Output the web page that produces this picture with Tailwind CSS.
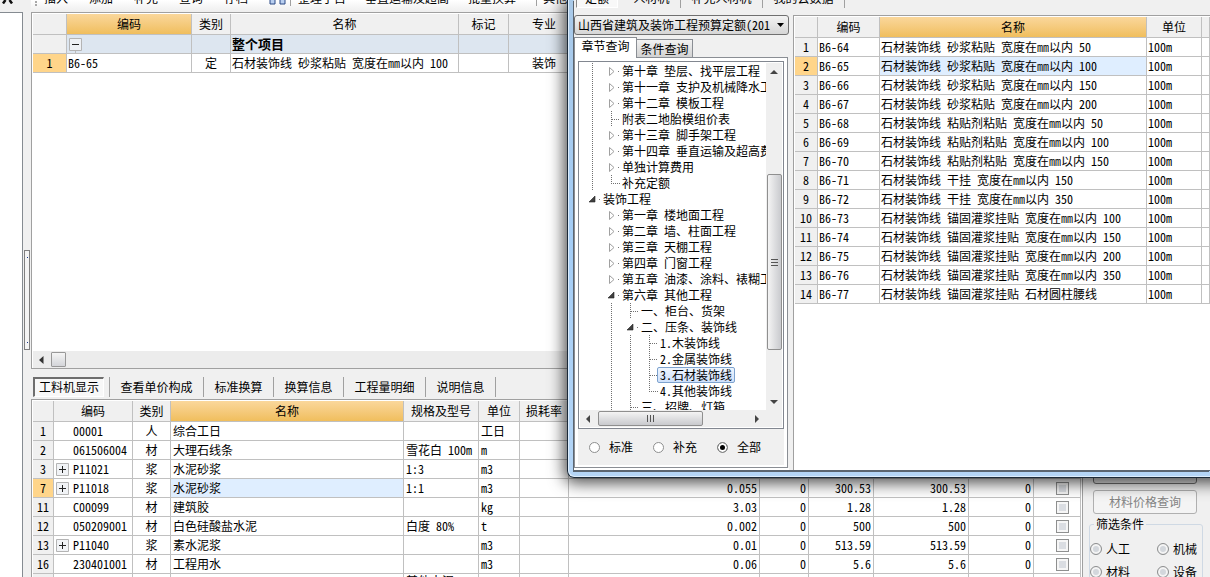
<!DOCTYPE html>
<html lang="zh-CN">
<head>
<meta charset="utf-8">
<title>工程预算定额查询</title>
<script src="https://cdn.jsdelivr.net/npm/@tailwindcss/browser@4"></script>
</head>
<body class="relative flex h-screen overflow-hidden bg-[#f0f0f0] font-['Noto_Sans_Mono_CJK_SC','Liberation_Mono','Noto_Sans_CJK_SC',monospace] text-[12px] leading-4 text-black">

<!-- left dock -->
<aside class="flex w-[23px] shrink-0 flex-col">
  <div class="h-3 shrink-0 overflow-hidden">
    <svg class="ml-[2px]" width="12" height="4" viewBox="0 0 12 4"><path d="M3.500 0 1 3.500M7.500 0 10 3.500" stroke="#111" stroke-width="2.500" fill="none"/></svg>
  </div>
  <div class="flex-1 border-t border-r border-[#858b91] bg-white"></div>
</aside>
<div class="flex w-2 shrink-0 flex-col px-px pt-[250px]">
  <div class="flex h-[100px] flex-col justify-between border border-[#808080] bg-[#f4f4f4] py-1.5">
    <i class="mx-auto size-px bg-blue-900"></i><i class="mx-auto size-px bg-blue-900"></i>
  </div>
</div>

<main class="flex min-w-0 flex-1 flex-col">
  <!-- toolbar -->
  <div class="h-3 shrink-0 overflow-hidden bg-linear-to-b from-white to-[#eeeeee]">
    <div class="-mt-[10px] flex h-4 items-center whitespace-nowrap">
      <span class="ml-1 mr-[7px] h-4 border-l-2 border-dotted border-[#a8a8a8]"></span>
      <div class="flex gap-[21px]">
        <button>插入</button><button>添加</button><button>补充</button><button>查询</button><button>存档</button>
        <button aria-label="查找"><svg width="17" height="16" viewBox="0 0 17 16"><path d="M1 2h5v12H1zM11 2h5v12h-5z" fill="#b9cff0" stroke="#2c4a86"/><path d="M6 8h5" stroke="#2c4a86" stroke-width="2"/></svg></button>
      </div>
      <span class="ml-[4px] mr-[7px] h-4 border-l border-[#a0a0a0]"></span>
      <div class="flex gap-[19px]"><button>整理子目</button><button>垂直运输及超高</button><button>批量换算</button></div>
      <span class="ml-5 mr-[6px] h-4 border-l border-[#a0a0a0]"></span>
      <button>其他</button>
    </div>
  </div>

  <!-- estimate items -->
  <section class="flex h-[357px] shrink-0 flex-col border border-[#a0a0a0] bg-white pt-px pl-px">
    <table class="w-full table-fixed border-separate border-spacing-0">
      <colgroup><col class="w-[34px]"><col class="w-[125px]"><col class="w-[39px]"><col class="w-[228px]"><col class="w-[50px]"><col class="w-[71px]"><col></colgroup>
      <thead><tr class="[&>th]:h-[21px] [&>th]:border-r [&>th]:border-b [&>th]:border-[#c0c0c0] [&>th]:bg-[#f0f0f0] [&>th]:p-0 [&>th]:font-normal">
        <th></th><th class="bg-linear-to-b from-[#fad79b] to-[#f0be5c]">编码</th><th>类别</th><th>名称</th><th>标记</th><th>专业</th><th></th></tr></thead>
      <tbody class="[&_td]:h-[19px] [&_td]:border-r [&_td]:border-b [&_td]:border-[#c0c0c0] [&_td]:px-px [&_td]:py-0 [&_td]:whitespace-nowrap">
        <tr class="bg-[#dde6f0]"><td class="bg-[#f0f0f0]"></td>
          <td><svg class="ml-px block" width="13" height="18" viewBox="0 0 13 18"><path d="M.5 3.500h12v12H.5z" fill="#eef1f5" stroke="#b4b4b4"/><path d="M3 9.500h7" stroke="#222"/><path d="M6.500 16v2" stroke="#bbb"/></svg></td>
          <td></td><td class="text-[13px] font-bold">整个项目</td><td></td><td></td><td></td></tr>
        <tr><td class="bg-[#ffd58a] text-center">1</td><td>B6-65</td><td class="text-center">定</td><td>石材装饰线 砂浆粘贴 宽度在㎜以内 100</td><td></td><td class="text-center">装饰</td><td></td></tr>
      </tbody>
    </table>
    <div class="flex-1"></div>
    <div class="flex h-[17px] items-center bg-[#ececec] pl-1.5">
      <svg width="5" height="8" viewBox="0 0 5 8"><path d="M4.500 0v8L0 4z" fill="#333"/></svg>
      <div class="ml-[7px] h-[15px] w-[15px] rounded-[1px] border border-[#989898] bg-linear-to-b from-[#f5f5f5] to-[#d4d5d9]"></div>
    </div>
  </section>

  <!-- detail tabs -->
  <nav class="flex h-[30px] shrink-0 items-center pl-0.5 pt-[5px] [&>button]:h-5 [&>button]:whitespace-nowrap">
    <button class="w-[71px] border border-t-2 border-l-2 border-t-[#6e6e6e] border-l-[#6e6e6e] border-r-white border-b-white bg-[#f8f8f8] leading-4">工料机显示</button>
    <button class="ml-[5px] w-[94px] border-l border-[#a0a0a0]">查看单价构成</button>
    <button class="w-[70px] border-l border-[#a0a0a0]">标准换算</button>
    <button class="w-[70px] border-l border-[#a0a0a0]">换算信息</button>
    <button class="w-[82px] border-l border-[#a0a0a0]">工程量明细</button>
    <button class="w-[71px] border-x border-[#a0a0a0]">说明信息</button>
  </nav>

  <div class="flex min-h-0 flex-1">
    <!-- labour, material and machine rows -->
    <section class="min-w-0 flex-1 overflow-hidden border-t border-l border-[#a0a0a0] bg-white pt-px pr-px pl-px">
      <table class="w-full table-fixed border-separate border-spacing-0">
        <colgroup><col class="w-[21px]"><col class="w-[79px]"><col class="w-[38px]"><col class="w-[233px]"><col class="w-[75px]"><col class="w-[41px]"><col class="w-[49px]"><col><col class="w-[49px]"><col class="w-[65px]"><col class="w-[95px]"><col class="w-[65px]"><col class="w-[47px]"></colgroup>
        <thead><tr class="[&>th]:h-[21px] [&>th]:border-r [&>th]:border-b [&>th]:border-[#c0c0c0] [&>th]:bg-[#f0f0f0] [&>th]:p-0 [&>th]:font-normal [&>th]:whitespace-nowrap">
          <th></th><th>编码</th><th>类别</th><th class="bg-linear-to-b from-[#fad79b] to-[#f0be5c]">名称</th><th>规格及型号</th><th>单位</th><th>损耗率</th><th></th><th></th><th></th><th></th><th></th><th></th></tr></thead>
        <tbody id="materials" class="[&_td]:h-[19px] [&_td]:border-r [&_td]:border-b [&_td]:border-[#c0c0c0] [&_td]:px-0.5 [&_td]:py-0 [&_td]:whitespace-nowrap"></tbody>
      </table>
    </section>

    <!-- filter panel -->
    <aside class="w-[128px] shrink-0 overflow-hidden border-l border-[#a0a0a0] pt-[61px] pr-[7px] pl-[6px]">
      <div class="mr-[6px] ml-1 flex flex-col gap-[6px]">
        <button class="h-6 rounded-[3px] border border-[#707070] bg-[#e6e6e6]" aria-label="信息价"></button>
        <button class="h-6 rounded-[3px] border border-[#b0b0b0] bg-[#f4f4f4] text-[#838383]" disabled>材料价格查询</button>
      </div>
      <fieldset class="mt-[2px] h-20 rounded-[3px] border border-[#cfd9e4]">
        <legend class="ml-1 px-0.5">筛选条件</legend>
        <div class="grid grid-cols-[67px_1fr] gap-y-[7px] pt-[9px] [&>label]:flex [&>label]:items-center [&>label]:gap-1 [&>label]:whitespace-nowrap [&_input]:size-3 [&_input]:shrink-0 [&_input]:appearance-none [&_input]:rounded-full [&_input]:border [&_input]:border-[#8e8f8f] [&_input]:bg-[#d3d7dc] [&_input]:shadow-[inset_0_0_0_2px_#f4f4f4]">
          <label><input type="radio" name="filter">人工</label><label><input type="radio" name="filter">机械</label>
          <label><input type="radio" name="filter">材料</label><label><input type="radio" name="filter">设备</label>
        </div>
      </fieldset>
    </aside>
  </div>
</main>

<!-- quota lookup window -->
<div class="absolute top-0 -right-4 left-[567px] z-20 flex h-[478px] rounded-bl-[7px] border-b border-l border-[#1c2a38] bg-linear-to-b from-[#a9c9e8] via-[#a4cdf6] to-[#b4d5f6] pr-4 pb-[6px] pl-[6px] shadow-[0_2px_16px_3px_#000000b3,inset_1px_-1px_0_#dcecfb]">
  <div class="flex min-w-0 flex-1 flex-col border-b border-[#5b6570] bg-[#f0f0f0] shadow-[-1px_1px_0_#5b6570]">
    <nav class="flex h-[15px] shrink-0 items-start overflow-hidden [&>button]:-mt-3 [&>button]:h-5 [&>button]:whitespace-nowrap">
      <button class="ml-[2px] w-[42px] border border-[#8a8a8a] border-r-white border-b-white bg-[#f8f8f8]">定额</button>
      <button class="ml-[5px] w-[58px] border-r border-[#a0a0a0]">人材机</button>
      <button class="w-[82px] border-r border-[#a0a0a0]">补充人材机</button>
      <button class="w-[82px] border-r border-[#a0a0a0]">我的云数据</button>
    </nav>
    <div class="flex min-h-0 flex-1">
      <div class="flex w-[215px] shrink-0 flex-col">
        <div class="relative h-5 shrink-0">
          <select aria-label="定额库" class="h-5 w-full appearance-none rounded-[3px] border border-[#707070] bg-linear-to-b from-[#f3f3f3] to-[#d6d6d6] pl-[3px] text-[12px] leading-4"><option>山西省建筑及装饰工程预算定额(201</option></select>
          <svg class="pointer-events-none absolute top-[8px] right-[5px]" width="7" height="4" viewBox="0 0 7 4"><path d="M0 0h7L3.500 4z" fill="#000"/></svg>
        </div>
        <div class="z-10 -mb-px flex h-[23px] shrink-0 items-end pt-[2px]">
          <button class="h-[21px] w-[63px] border border-b-0 border-[#8a8e94] bg-white pb-1">章节查询</button>
          <button class="h-[19px] w-[56px] border border-l-0 border-[#8a8e94] bg-linear-to-b from-[#f2f2f2] to-[#d2d2d2]">条件查询</button>
        </div>
        <div class="mr-px flex min-h-0 flex-1 flex-col border border-[#8a8e94] bg-white p-[3px] pb-[2px]">
          <div class="flex h-[368px] shrink-0 flex-col border border-[#828790] bg-white p-px">
            <div class="flex min-h-0 flex-1">
              <ul id="tree" class="min-w-0 flex-1 overflow-hidden pl-[3px]"></ul>
              <div class="flex w-[16px] shrink-0 flex-col items-center bg-[#efefef]">
                <svg class="mt-[7px]" width="8" height="4" viewBox="0 0 8 4"><path d="M0 4h8L4 0z" fill="#444"/></svg>
                <div class="mt-[100px] flex h-[176px] w-[15px] flex-col items-center justify-center gap-[2px] rounded-[2px] border border-[#8f8f8f] bg-linear-to-r from-[#f4f4f4] to-[#c9cace]">
                  <i class="h-px w-[7px] bg-[#555]"></i><i class="h-px w-[7px] bg-[#555]"></i><i class="h-px w-[7px] bg-[#555]"></i>
                </div>
                <svg class="mt-auto mb-[6px]" width="8" height="4" viewBox="0 0 8 4"><path d="M0 0h8L4 4z" fill="#444"/></svg>
              </div>
            </div>
            <div class="flex h-[17px] shrink-0 items-center bg-[#efefef] pr-[23px] pl-[6px]">
              <svg width="4" height="8" viewBox="0 0 4 8"><path d="M4 0v8L0 4z" fill="#444"/></svg>
              <div class="ml-[8px] flex h-[15px] w-[105px] items-center justify-center gap-[2px] rounded-[2px] border border-[#8f8f8f] bg-linear-to-b from-[#f4f4f4] to-[#c9cace]">
                <i class="h-[7px] w-px bg-[#555]"></i><i class="h-[7px] w-px bg-[#555]"></i><i class="h-[7px] w-px bg-[#555]"></i>
              </div>
              <svg class="ml-auto" width="4" height="8" viewBox="0 0 4 8"><path d="M0 0v8L4 4z" fill="#444"/></svg>
            </div>
          </div>
          <div class="flex flex-1 items-center gap-5 bg-[#f0f0f0] pl-[11px] [&>label]:flex [&>label]:items-center [&>label]:gap-[9px] [&_input]:size-[11px] [&_input]:appearance-none [&_input]:rounded-full [&_input]:border [&_input]:border-[#8e8f8f] [&_input]:bg-white [&_input]:checked:bg-black [&_input]:checked:shadow-[inset_0_0_0_2px_#fff]">
            <label><input type="radio" name="scope">标准</label>
            <label><input type="radio" name="scope">补充</label>
            <label><input type="radio" name="scope" checked>全部</label>
          </div>
        </div>
        <div class="h-[2px] shrink-0 bg-white"></div>
      </div>
      <section class="ml-1 min-w-0 flex-1 overflow-hidden border-t border-l border-[#a0a0a0] bg-white pt-px pl-px">
        <table class="w-full table-fixed border-separate border-spacing-0">
          <colgroup><col class="w-[23px]"><col class="w-[62px]"><col><col class="w-[55px]"><col class="w-[8px]"></colgroup>
          <thead><tr class="[&>th]:h-[21px] [&>th]:border-r [&>th]:border-b [&>th]:border-[#c0c0c0] [&>th]:bg-[#f0f0f0] [&>th]:p-0 [&>th]:font-normal">
            <th></th><th>编码</th><th class="bg-linear-to-b from-[#fad79b] to-[#f0be5c]">名称</th><th>单位</th><th></th></tr></thead>
          <tbody id="quotas" class="[&_td]:h-[19px] [&_td]:border-r [&_td]:border-b [&_td]:border-[#c0c0c0] [&_td]:px-px [&_td]:py-0 [&_td]:whitespace-nowrap"></tbody>
        </table>
      </section>
    </div>
  </div>
</div>

<script>
// detail rows: no, expandable, code, kind, name, spec, unit, five figures
const materials = [
  ['1', 0, '00001', '人', '综合工日', '', '工日'],
  ['2', 0, '061506004', '材', '大理石线条', '雪花白 100m', 'm'],
  ['3', 1, 'P11021', '浆', '水泥砂浆', '1:3', 'm3'],
  ['7', 1, 'P11018', '浆', '水泥砂浆', '1:1', 'm3', '0.055', '0', '300.53', '300.53', '0'],
  ['11', 0, 'C00099', '材', '建筑胶', '', 'kg', '3.03', '0', '1.28', '1.28', '0'],
  ['12', 0, '050209001', '材', '白色硅酸盐水泥', '白度 80%', 't', '0.002', '0', '500', '500', '0'],
  ['13', 1, 'P11040', '浆', '素水泥浆', '', 'm3', '0.01', '0', '513.59', '513.59', '0'],
  ['16', 0, '230401001', '材', '工程用水', '', 'm3', '0.06', '0', '5.6', '5.6', '0'],
  ['', 0, '', '', '', '<div class="leading-[13px]">其他水泥<br>32.5</div>', '', '', '', '', '', ''],
];
const plus = '<svg class="shrink-0" width="13" height="13" viewBox="0 0 13 13"><path d="M.5.5h12v12H.5z" fill="#f1f3f6" stroke="#b4b4b4"/><path d="M3 6.500h7M6.500 3v7" stroke="#222"/></svg>';
document.getElementById('materials').innerHTML = materials.map(r => {
  const on = r[0] === '7';
  const nums = [7, 8, 9, 10, 11].map(i => `<td class="text-right">${r[i] || ''}</td>`).join('');
  return `<tr><td class="text-center ${on ? 'bg-[#ffd58a]' : 'bg-[#f0f0f0]'}">${r[0]}</td>
    <td><div class="flex items-center"><span class="flex w-[17px]">${r[1] ? plus : ''}</span>${r[2]}</div></td>
    <td class="text-center">${r[3]}</td><td class="${on ? 'bg-[#dfeeff]' : ''}">${r[4]}</td><td>${r[5]}</td><td>${r[6]}</td><td></td>${nums}
    <td class="border-r-0"><input type="checkbox" aria-label="选择 ${r[2]}" class="ml-5 block size-[13px] appearance-none border border-[#8e8f8f] bg-[#dadde2] shadow-[inset_0_0_0_2px_#f6f6f6]"></td></tr>`;
}).join('');

const names = ['砂浆粘贴 宽度在㎜以内 50', '砂浆粘贴 宽度在㎜以内 100', '砂浆粘贴 宽度在㎜以内 150', '砂浆粘贴 宽度在㎜以内 200',
  '粘贴剂粘贴 宽度在㎜以内 50', '粘贴剂粘贴 宽度在㎜以内 100', '粘贴剂粘贴 宽度在㎜以内 150', '干挂 宽度在㎜以内 150', '干挂 宽度在㎜以内 350',
  '锚固灌浆挂贴 宽度在㎜以内 100', '锚固灌浆挂贴 宽度在㎜以内 150', '锚固灌浆挂贴 宽度在㎜以内 200', '锚固灌浆挂贴 宽度在㎜以内 350', '锚固灌浆挂贴 石材圆柱腰线'];
document.getElementById('quotas').innerHTML = names.map((n, i) => {
  const on = i === 1;
  return `<tr><td class="text-center ${on ? 'bg-[#ffd58a]' : 'bg-[#f0f0f0]'}">${i + 1}</td><td>B6-${64 + i}</td>
    <td class="${on ? 'bg-[#dfeeff]' : ''}">石材装饰线 ${n}</td><td>100m</td><td></td></tr>`;
}).join('');

// tree cells: v line, b blank, t tee, l corner, c collapsed, o open
const dash = 'stroke="#707070" stroke-dasharray="1 1"';
const cell = {
  v: `<path d="M9.500 0v16" ${dash}/>`,
  b: '',
  t: `<path d="M9.500 0v16M10 8.500h8" ${dash}/>`,
  l: `<path d="M9.500 0v8M9 8.500h9" ${dash}/>`,
  c: '<path d="M7.500 4.500v8l4.500-4z" fill="#fff" stroke="#a0a0a0"/><path d="M16 8.500h1" stroke="#777"/>',
  o: '<path d="M12 5v6H6z" fill="#404040" stroke="#222" stroke-width=".6"/><path d="M16 8.500h1" stroke="#777"/>',
};
const tree = [
  ['vc', '第十章 垫层、找平层工程'], ['vc', '第十一章 支护及机械降水工程'], ['vc', '第十二章 模板工程'], ['vt', '附表二地胎模组价表'],
  ['vc', '第十三章 脚手架工程'], ['vc', '第十四章 垂直运输及超高费'], ['vc', '单独计算费用'], ['vl', '补充定额'], ['o', '装饰工程'],
  ['bc', '第一章 楼地面工程'], ['bc', '第二章 墙、柱面工程'], ['bc', '第三章 天棚工程'], ['bc', '第四章 门窗工程'], ['bc', '第五章 油漆、涂料、裱糊工程'],
  ['bo', '第六章 其他工程'], ['bvt', '一、柜台、货架'], ['bvo', '二、压条、装饰线'], ['bvvt', '1.木装饰线'], ['bvvt', '2.金属装饰线'],
  ['bvvt', '3.石材装饰线', 1], ['bvvl', '4.其他装饰线'], ['bvt', '三、招牌、灯箱'],
];
document.getElementById('tree').innerHTML = tree.map(([g, t, on]) =>
  `<li class="flex h-4 items-center whitespace-nowrap">${[...g].map(k => `<svg class="shrink-0" width="19" height="16" viewBox="0 0 19 16">${cell[k]}</svg>`).join('')}<span class="${on ? '-ml-[2px] rounded-[2px] border border-[#7da2ce] bg-linear-to-b from-[#eef5fe] to-[#cfe1fb] px-[2px] leading-[14px]' : 'pl-px'}">${t}</span></li>`).join('');
</script>
</body>
</html>
